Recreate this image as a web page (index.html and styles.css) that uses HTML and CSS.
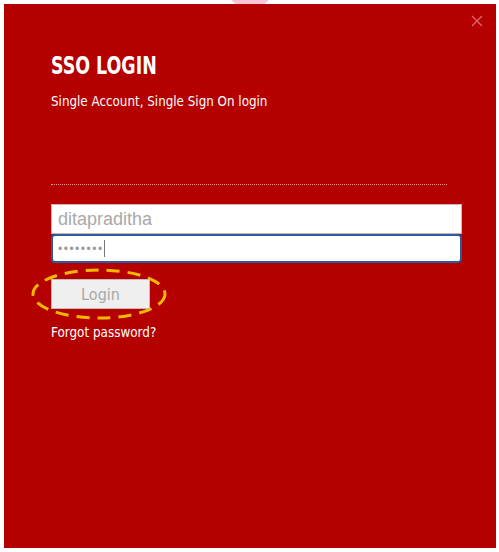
FILE: index.html
```html
<!DOCTYPE html>
<html>
<head>
<meta charset="utf-8">
<link rel="stylesheet" href="styles.css">
</head>
<body>
<div class="blob"></div>
<div class="panel">
  <div class="close">
    <svg width="12" height="12" viewBox="0 0 12 12"><path d="M1 1L11 11M11 1L1 11" stroke="#e26a74" stroke-width="1.2" fill="none"/></svg>
  </div>
  <h1 class="title"><span class="narrow t">SSO LOGIN</span></h1>
  <p class="subtitle"><span class="narrow s">Single Account, Single Sign On login</span></p>
  <div class="divider"></div>
  <form class="form">
    <div class="field">ditapraditha</div>
    <div class="field focused"><span class="dots">••••••••</span><span class="caret"></span></div>
    <div class="login-wrap">
      <svg class="ring" width="138" height="54" viewBox="0 0 138 54"><ellipse cx="69" cy="27" rx="66" ry="24" fill="none" stroke="#f3b800" stroke-width="3" stroke-dasharray="13 8"/></svg>
      <div class="btn">Login</div>
    </div>
    <div class="forgot"><span class="narrow f">Forgot password?</span></div>
  </form>
</div>
</body>
</html>
```
FILE: styles.css
```css
html, body { margin: 0; padding: 0; background: #ffffff; }
body { width: 499px; height: 552px; overflow: hidden; position: relative; }
.blob {
  position: absolute; left: 228px; top: -26px; width: 44px; height: 34px;
  border-radius: 50%; background: #fbc4d6;
}
.panel {
  position: relative;
  margin: 4px 3px 4px 4px;
  height: 544px;
  background: #b50000;
  box-sizing: border-box;
  padding: 48px 0 0 47px;
  font-family: "DejaVu Sans Condensed", "DejaVu Sans", sans-serif;
  color: #fff;
}
.narrow { display: inline-block; transform-origin: 0 50%; white-space: nowrap; }
.t { transform: scaleX(0.775); }
.s { transform: scaleX(0.915); }
.f { transform: scaleX(0.92); }
.close { position: absolute; right: 13px; top: 11px; width: 12px; height: 12px; line-height: 0; }
.title {
  margin: 0; font-size: 25px; font-weight: 700; line-height: 28px;
}
.subtitle { margin: 12px 0 0; font-size: 14.5px; line-height: 18px; }
.divider { margin: 74px 0 0; width: 396px; border-top: 1px dotted #e99a9a; }
.form { margin-top: 19px; }
.field {
  box-sizing: border-box; width: 411px; height: 30px; background: #fff;
  border: 1px solid #d9b0b0; padding: 0 6px;
  font-family: "Liberation Sans", Arial, sans-serif; font-size: 18px; color: #a9a9a9;
  display: flex; align-items: center;
}
.field.focused {
  height: 29px; border: 2px solid #2a5aa0; border-radius: 4px; padding: 0 5px;
}
.dots { font-size: 12px; letter-spacing: 1.5px; color: #999; }
.caret { display: inline-block; width: 1px; height: 17px; background: #777; margin-left: 0; }
.login-wrap { position: relative; margin-top: 16px; width: 99px; height: 30px; }
.ring { position: absolute; left: -21px; top: -12px; }
.btn {
  position: relative; box-sizing: border-box; width: 99px; height: 30px;
  background: #efefef; border: 1px solid #c9b8b8;
  display: flex; align-items: center; justify-content: center;
  font-size: 16px; color: #a8a8a8;
}
.forgot { margin-top: 14px; font-size: 14.5px; line-height: 18px; }
```
